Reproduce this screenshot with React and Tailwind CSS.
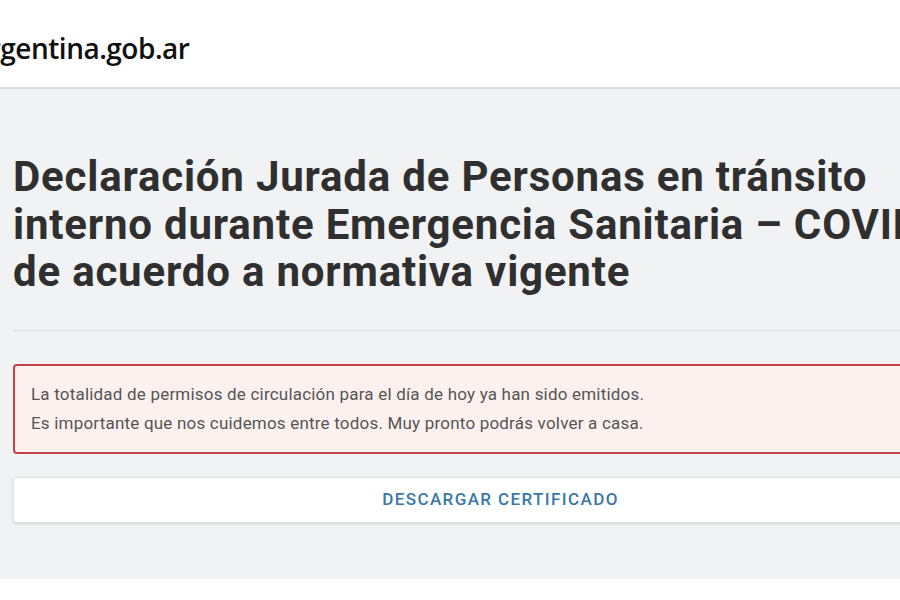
export default function App() {
  return (
    <div className="w-[900px] h-[600px] overflow-hidden bg-white" style={{ fontFamily: 'Roboto, "Liberation Sans", sans-serif' }}>
      {/* Encabezado */}
      <header className="h-[89px] bg-white border-b-2 border-[#d9d9d9] pt-[34px]">
        <div
          className="ml-[-27px] text-[28px] font-semibold tracking-[-0.5px] text-[#111] leading-none whitespace-nowrap"
          style={{ fontFamily: '"Open Sans", "Noto Sans", sans-serif' }}
        >
          argentina.gob.ar
        </div>
      </header>

      <main className="bg-[#f1f2f4] h-[490px] pl-[13px] pt-[64px]">
        <div className="w-[975px]">
          <h1 className="text-[42px] font-bold leading-[47.5px] tracking-[0.8px] text-[#2f2f2f] whitespace-nowrap pb-[34px] border-b border-[#dcdcdc] mb-[33px]">
            Declaración Jurada de Personas en tránsito
            <br />
            interno durante Emergencia Sanitaria – COVID-19
            <br />
            de acuerdo a normativa vigente
          </h1>

          <div className="border-2 border-[#c2414b] rounded-[4px] bg-[#fdf1f0] px-[16px] pt-[14px] pb-[14px] text-[17px] tracking-[0.2px] text-[#555] leading-[29px] whitespace-nowrap">
            <p>La totalidad de permisos de circulación para el día de hoy ya han sido emitidos.</p>
            <p>Es importante que nos cuidemos entre todos. Muy pronto podrás volver a casa.</p>
          </div>

          <button className="mt-[23px] w-full h-[46px] bg-white rounded-[3px] border border-[#e3e3e3] shadow-[0_1px_3px_rgba(0,0,0,0.15)] text-[17px] font-medium tracking-[1.4px] text-[#3a77a8]">
            DESCARGAR CERTIFICADO
          </button>
        </div>
      </main>
    </div>
  );
}
